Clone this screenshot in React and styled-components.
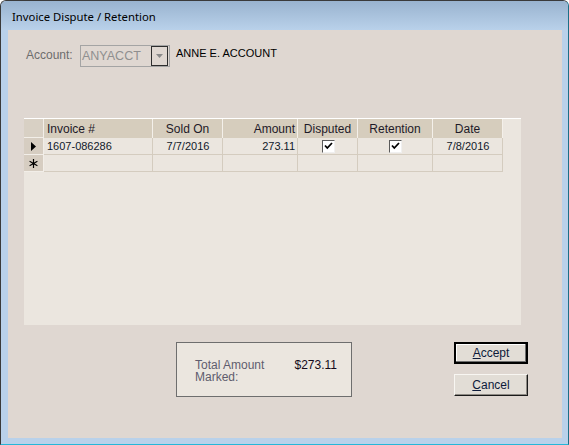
import styled, { createGlobalStyle } from "styled-components";

const GlobalStyle = createGlobalStyle`
    html, body {
        margin: 0;
        padding: 0;
        background: #ffffff;
    }
    body {
        font-family: "Liberation Sans", Arial, sans-serif;
        font-size: 11px;
    }
`;

const Window = styled.div`
    width: 569px;
    height: 445px;
    box-sizing: border-box;
    border-top: 1px solid #3a3a3a;
    border-left: 1px solid #3a3a3a;
    border-right: 1px solid #1c6f86;
    border-bottom: 1px solid #25b7d8;
    border-radius: 6px 6px 0 0;
    background: #b9d1ea;
    display: flex;
    flex-direction: column;
    overflow: hidden;
`;

const TitleBar = styled.div`
    height: 29px;
    flex: none;
    background: linear-gradient(#99b3cf, #b9d1ea);
    display: flex;
    align-items: center;
    padding: 1px 0 0 11px;
    box-sizing: border-box;
    font-family: "Noto Sans", "Open Sans", sans-serif;
    font-size: 11.3px;
    color: #000;
`;

const Frame = styled.div`
    flex: 1;
    padding: 0 6px 6px 7px;
    display: flex;
`;

const Client = styled.div`
    flex: 1;
    background: #dfd7d1;
    display: flex;
    flex-direction: column;
`;

const AccountRow = styled.div`
    display: flex;
    align-items: center;
    height: 22px;
    margin: 15px 0 0 18px;
`;

const Label = styled.span`
    color: #6d6d6d;
    width: 54px;
    padding-bottom: 3px;
    font-size: 12px;
`;

const Combo = styled.div`
    width: 90px;
    height: 22px;
    box-sizing: border-box;
    border: 1px solid #a4a4a4;
    display: flex;
    align-items: center;
    justify-content: space-between;
    padding: 0 1px 0 1px;
    color: #8f8f8f;
    font-size: 12.5px;
`;

const DropButton = styled.span`
    width: 17px;
    height: 20px;
    box-sizing: border-box;
    border: 1px solid #2e2e2e;
    display: flex;
    align-items: center;
    justify-content: center;
`;

const AccountName = styled.span`
    margin-left: 6px;
    color: #000;
    padding-bottom: 6px;
    font-size: 11px;
`;

const Grid = styled.div`
    margin: 51px 0 0 16px;
    width: 497px;
    height: 207px;
    background: #ebe6df;
    border-top: 1px solid #ffffff;
    box-sizing: border-box;
`;

const GridRow = styled.div`
    display: grid;
    grid-template-columns: 20px 109px 70px 75px 60px 75px 70px;
    width: 479px;
    height: ${({ $header }) => ($header ? "19px" : "17px")};
`;

const HeadCell = styled.div`
    background: #d6cdbd;
    border-right: 1px solid #f4f0ea;
    display: flex;
    align-items: center;
    justify-content: ${({ $align }) => $align || "center"};
    padding: 0 ${({ $align }) => ($align === "flex-end" ? "2px" : "3px")};
    box-sizing: border-box;
    color: #1e1a28;
    font-size: 12px;
`;

const RowHead = styled.div`
    background: ${({ $corner }) => ($corner ? "#d8d0c4" : "#d6cdc1")};
    border-right: 1px solid #f2eee8;
    border-bottom: 1px solid #f2eee8;
    display: flex;
    align-items: center;
    justify-content: center;
    box-sizing: border-box;
`;

const Cell = styled.div`
    border-right: 1px solid #d4ccbf;
    border-bottom: 1px solid #d4ccbf;
    display: flex;
    align-items: center;
    justify-content: ${({ $align }) => $align || "flex-start"};
    padding: 0 2px 0 3px;
    box-sizing: border-box;
    color: #10182a;
    font-size: 11px;
`;

const CheckBox = styled.span`
    width: 13px;
    height: 13px;
    box-sizing: border-box;
    background: #fff;
    border-top: 1px solid #5a5a5a;
    border-left: 1px solid #5a5a5a;
    border-right: 1px solid #f0f0f0;
    border-bottom: 1px solid #f0f0f0;
    display: flex;
    align-items: center;
    justify-content: center;
`;

const BottomRow = styled.div`
    display: flex;
    justify-content: space-between;
    align-items: flex-start;
    margin-top: 17px;
    padding: 0 34px 0 168px;
`;

const TotalBox = styled.div`
    width: 176px;
    height: 55px;
    box-sizing: border-box;
    border: 1px solid #6e6e6e;
    background: #ebe6df;
    display: flex;
    justify-content: space-between;
    padding: 16px 14px 0 18px;
    font-size: 12px;
`;

const TotalLabel = styled.span`
    color: #5f5d6e;
    line-height: 12px;
    width: 80px;
`;

const TotalValue = styled.span`
    color: #140a1a;
    line-height: 12px;
`;

const Buttons = styled.div`
    display: flex;
    flex-direction: column;
    gap: 10px;
`;

const Button = styled.button`
    width: 74px;
    height: 22px;
    box-sizing: border-box;
    background: #e2ddd6;
    font-family: "Liberation Sans", Arial, sans-serif;
    font-size: 12px;
    color: #0d1a3a;
    padding: 0;
    border: ${({ $default }) => ($default ? "2px solid #000" : "1px solid")};
    border-color: ${({ $default }) =>
        $default ? "#000" : "#f8f6f2 #1a1a1a #1a1a1a #f8f6f2"};
    box-shadow: ${({ $default }) =>
        $default ? "inset -1px -1px 0 #6e6e6e, inset 1px 1px 0 #ffffff" : "inset -1px -1px 0 #8e8a84"};
    u {
        text-decoration: underline;
    }
`;

const Arrow = () => (
    <svg width="7" height="4" viewBox="0 0 7 4">
        <path d="M0 0h7L3.5 4z" fill="#8a8a8a" />
    </svg>
);

const Pointer = () => (
    <svg width="5" height="9" viewBox="0 0 5 9">
        <path d="M0 0l5 4.5L0 9z" fill="#000" />
    </svg>
);

const Star = () => (
    <svg width="9" height="9" viewBox="0 0 9 9" stroke="#000" strokeWidth="1.2">
        <path d="M4.5 0v9M0.6 2.25l7.8 4.5M0.6 6.75l7.8-4.5" />
    </svg>
);

const Check = () => (
    <svg width="9" height="8" viewBox="0 0 9 8">
        <path d="M1 3.5l2.3 2.5L8 1" fill="none" stroke="#000" strokeWidth="1.8" />
    </svg>
);

const columns = [
    { title: "Invoice #", align: "flex-start" },
    { title: "Sold On" },
    { title: "Amount", align: "flex-end" },
    { title: "Disputed" },
    { title: "Retention" },
    { title: "Date" },
];

const invoice = ["1607-086286", "7/7/2016", "273.11", true, true, "7/8/2016"];

export default function App() {
    return (
        <>
            <GlobalStyle />
            <Window>
                <TitleBar>Invoice Dispute / Retention</TitleBar>
                <Frame>
                    <Client>
                        <AccountRow>
                            <Label>Account:</Label>
                            <Combo>
                                ANYACCT
                                <DropButton>
                                    <Arrow />
                                </DropButton>
                            </Combo>
                            <AccountName>ANNE E. ACCOUNT</AccountName>
                        </AccountRow>
                        <Grid>
                            <GridRow $header>
                                <RowHead $corner />
                                {columns.map((c) => (
                                    <HeadCell key={c.title} $align={c.align}>
                                        {c.title}
                                    </HeadCell>
                                ))}
                            </GridRow>
                            <GridRow>
                                <RowHead>
                                    <Pointer />
                                </RowHead>
                                {invoice.map((v, i) => (
                                    <Cell
                                        key={i}
                                        $align={i === 0 ? "flex-start" : i === 2 ? "flex-end" : "center"}
                                    >
                                        {v === true ? (
                                            <CheckBox>
                                                <Check />
                                            </CheckBox>
                                        ) : (
                                            v
                                        )}
                                    </Cell>
                                ))}
                            </GridRow>
                            <GridRow>
                                <RowHead>
                                    <Star />
                                </RowHead>
                                {columns.map((c) => (
                                    <Cell key={c.title} />
                                ))}
                            </GridRow>
                        </Grid>
                        <BottomRow>
                            <TotalBox>
                                <TotalLabel>Total Amount Marked:</TotalLabel>
                                <TotalValue>$273.11</TotalValue>
                            </TotalBox>
                            <Buttons>
                                <Button $default>
                                    <u>A</u>ccept
                                </Button>
                                <Button>
                                    <u>C</u>ancel
                                </Button>
                            </Buttons>
                        </BottomRow>
                    </Client>
                </Frame>
            </Window>
        </>
    );
}
